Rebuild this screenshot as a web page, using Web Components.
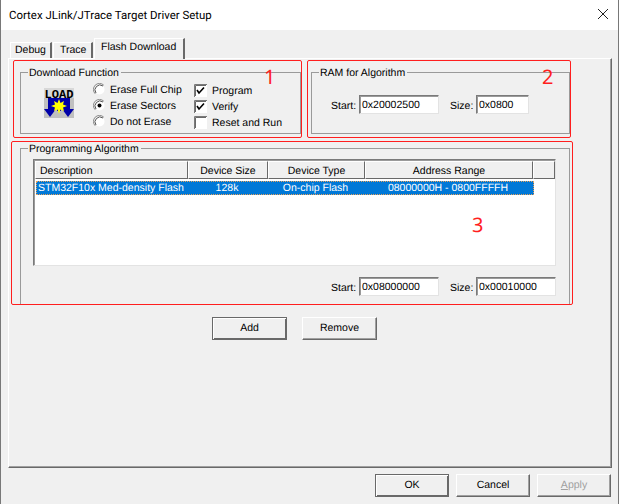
<!DOCTYPE html>
<html>
<head>
<meta charset="utf-8">
<title>Cortex JLink/JTrace Target Driver Setup</title>
<style>
    html{ margin: 0; padding: 0; background: #787878; }
    body{
        margin: 0 1px;
        padding: 0;
        width: 617px;
        height: 504px;
        overflow: hidden;
        background: #f0f0f0;
        font: 10.5px "Liberation Sans", Arial, sans-serif;
        text-rendering: geometricPrecision;
        color: #000;
    }
    .top_row{ display: grid; grid-template-columns: 281px 259px; column-gap: 10px; width: 550px; }
    .algo_group{ display: block; width: 550px; margin-top: 7px; }
</style>
</head>
<body>
<dlg-titlebar>Cortex JLink/JTrace Target Driver Setup</dlg-titlebar>
<dlg-tabs></dlg-tabs>
<dlg-panel>
    <div class="top_row">
        <dlg-group label="Download Function"><download-function></download-function></dlg-group>
        <dlg-group label="RAM for Algorithm"><ram-fields></ram-fields></dlg-group>
    </div>
    <dlg-group class="algo_group" label="Programming Algorithm"><algo-section></algo-section></dlg-group>
    <add-remove></add-remove>
</dlg-panel>
<dlg-footer></dlg-footer>

<red-mark x="13" y="60" w="289" h="78" tx="250" ty="5">1</red-mark>
<red-mark x="307" y="60" w="264" h="78" tx="234" ty="5">2</red-mark>
<red-mark x="11" y="141" w="562" h="164" tx="460" ty="72">3</red-mark>

<script>
class dlgTitlebar extends HTMLElement{
    constructor(){
        super();
        this.attachShadow({mode:"open"});
    }
    connectedCallback(){
        this.shadowRoot.innerHTML = `
        <style>
            :host{
                display: flex;
                align-items: center;
                justify-content: space-between;
                height: 30px;
                background: #fff;
                padding: 0 5px 0 8px;
                font: 11.45px Roboto, "Noto Sans", sans-serif;
            }
            svg{ display: block; margin: 0 4px 2px 0; }
        </style>
        <slot></slot>
        <svg width="12" height="12" viewBox="0 0 12 12"><path d="M1 1L11 11M11 1L1 11" stroke="#222" stroke-width="1" fill="none"/></svg>
        `;
    }
}

class dlgTabs extends HTMLElement{
    constructor(){
        super();
        this.attachShadow({mode:"open"});
    }
    connectedCallback(){
        this.shadowRoot.innerHTML = `
        <style>
            :host{
                display: flex;
                align-items: flex-end;
                height: 28px;
                padding-left: 9px;
                box-sizing: border-box;
                position: relative;
                z-index: 1;
            }
            .tab{
                box-sizing: border-box;
                height: 16px;
                padding: 0 0 0 4px;
                border-top: 1px solid #fff;
                border-left: 1px solid #fff;
                border-right: 2px solid #696969;
                margin-right: 1px;
                line-height: 14px;
            }
            .active{
                height: 21px;
                padding: 1px 0 0 6px;
                margin: 0 0 -1px 0;
                background: #f0f0f0;
            }
        </style>
        <div class="tab" style="width:42px">Debug</div>
        <div class="tab" style="width:40px;padding-left:6px">Trace</div>
        <div class="tab active" style="width:91px">Flash Download</div>
        `;
    }
}

class dlgPanel extends HTMLElement{
    constructor(){
        super();
        this.attachShadow({mode:"open"});
    }
    connectedCallback(){
        this.shadowRoot.innerHTML = `
        <style>
            :host{
                display: block;
                box-sizing: border-box;
                width: 604px;
                height: 410px;
                margin-left: 7px;
                padding: 6px 0 0 11px;
                border-top: 1px solid #fff;
                border-left: 1px solid #fff;
                border-right: 1px solid #696969;
                border-bottom: 1px solid #696969;
                box-shadow: inset -1px -1px 0 #a0a0a0;
            }
        </style>
        <slot></slot>
        `;
    }
}

class dlgGroup extends HTMLElement{
    constructor(){
        super();
        this.attachShadow({mode:"open"});
    }
    connectedCallback(){
        this.shadowRoot.innerHTML = `
        <style>
            :host{ display: block; }
            fieldset{
                margin: 0;
                padding: 0;
                border: 1px solid #9a9a9a;
                min-width: 0;
            }
            legend{
                margin-left: 7px;
                padding: 0 2px 0 1px;
                line-height: 14px;
            }
            legend span{ display: block; transform: translateY(1px); }
        </style>
        <fieldset>
            <legend><span>${this.getAttribute("label")}</span></legend>
            <slot></slot>
        </fieldset>
        `;
    }
}

class optRadio extends HTMLElement{
    constructor(){
        super();
        this.attachShadow({mode:"open"});
    }
    connectedCallback(){
        const dot = this.hasAttribute("checked") ? `<circle cx="6.5" cy="6.5" r="2" fill="#000"/>` : ``;
        this.shadowRoot.innerHTML = `
        <style>
            :host{ display: flex; align-items: center; height: 16px; column-gap: 4px; }
            svg{ display: block; flex: none; }
            span{ padding-top: 1px; }
        </style>
        <svg width="13" height="13" viewBox="0 0 13 13">
            <circle cx="6.5" cy="6.5" r="5" fill="#fff"/>
            <path d="M2.2 10.8A6 6 0 0 1 10.8 2.2" fill="none" stroke="#8a8a8a"/>
            <path d="M3 10A5 5 0 0 1 10 3" fill="none" stroke="#555"/>
            ${dot}
        </svg>
        <span><slot></slot></span>
        `;
    }
}

class optCheck extends HTMLElement{
    constructor(){
        super();
        this.attachShadow({mode:"open"});
    }
    connectedCallback(){
        const mark = this.hasAttribute("checked") ? `<path d="M3 6L5 9L10 3.5" fill="none" stroke="#000" stroke-width="1.6"/>` : ``;
        this.shadowRoot.innerHTML = `
        <style>
            :host{ display: flex; align-items: center; height: 16px; column-gap: 5px; }
            svg{ display: block; flex: none; }
            span{ padding-top: 1px; }
        </style>
        <svg width="13" height="13" viewBox="0 0 13 13">
            <rect x="0" y="0" width="13" height="13" fill="#fff"/>
            <path d="M0.5 13V0.5H13" fill="none" stroke="#7a7a7a"/>
            <path d="M1.5 12V1.5H12" fill="none" stroke="#696969"/>
            ${mark}
        </svg>
        <span><slot></slot></span>
        `;
    }
}

class downloadFunction extends HTMLElement{
    constructor(){
        super();
        this.attachShadow({mode:"open"});
    }
    connectedCallback(){
        this.shadowRoot.innerHTML = `
        <style>
            :host{ display: flex; height: 54px; padding: 2px 0 0 23px; box-sizing: border-box; }
            .icon{ display: block; margin: 7px 19px 0 0; }
            .col{ display: flex; flex-direction: column; width: 101px; }
            .col + .col{ margin-top: 1px; }
        </style>
        <svg class="icon" width="30" height="30" viewBox="0 0 30 30">
            <rect width="30" height="30" fill="#c0c0c0"/>
            <rect width="30" height="10" fill="#d8d8d8"/>
            <text x="0.5" y="9.5" textLength="29" lengthAdjust="spacingAndGlyphs" font-family="Liberation Mono, monospace" font-weight="700" font-size="12" fill="#000">LOAD</text>
            <path d="M4 10H26V21H30L24 29L18 21H17V23H13V21H12L6 29L0 21H4Z" fill="#0000a8"/>
            <path d="M15 11L16.5 15L20 13L19 16.5L23 18L19 19.5L20 23L16.5 21.5L15 26L13.5 21.5L10 23L11 19.5L7 18L11 16.5L10 13L13.5 15Z" fill="#ffff00"/>
        </svg>
        <div class="col">
            <opt-radio>Erase Full Chip</opt-radio>
            <opt-radio checked>Erase Sectors</opt-radio>
            <opt-radio>Do not Erase</opt-radio>
        </div>
        <div class="col">
            <opt-check checked>Program</opt-check>
            <opt-check checked>Verify</opt-check>
            <opt-check>Reset and Run</opt-check>
        </div>
        `;
    }
}

class addrField extends HTMLElement{
    constructor(){
        super();
        this.attachShadow({mode:"open"});
    }
    connectedCallback(){
        const label = this.getAttribute("label");
        const value = this.getAttribute("value");
        const width = this.getAttribute("width");
        const lw = label === "Start:" ? 25 : 23;
        this.shadowRoot.innerHTML = `
        <style>
            :host{ display: flex; align-items: center; column-gap: 3px; }
            span{ width: ${lw}px; padding-top: 2px; }
            .box{
                box-sizing: border-box;
                width: ${width}px;
                height: 19px;
                padding: 2px 0 0 2px;
                line-height: 14px;
                background: #fff;
                border: 1px solid;
                border-color: #7a7a7a #e3e3e3 #e3e3e3 #7a7a7a;
                box-shadow: inset 1px 1px 0 #9a9a9a;
            }
        </style>
        <span>${label}</span>
        <div class="box">${value}</div>
        `;
    }
}

class ramFields extends HTMLElement{
    constructor(){
        super();
        this.attachShadow({mode:"open"});
    }
    connectedCallback(){
        this.shadowRoot.innerHTML = `
        <style>
            :host{ display: flex; height: 54px; padding: 16px 0 0 19px; box-sizing: border-box; column-gap: 11px; align-items: flex-start; }
        </style>
        <addr-field label="Start:" value="0x20002500" width="80"></addr-field>
        <addr-field label="Size:" value="0x0800" width="53"></addr-field>
        `;
    }
}

class algoList extends HTMLElement{
    constructor(){
        super();
        this.attachShadow({mode:"open"});
    }
    connectedCallback(){
        this.shadowRoot.innerHTML = `
        <style>
            :host{
                display: block;
                box-sizing: border-box;
                width: 523px;
                height: 107px;
                background: #fff;
                border: 1px solid;
                border-color: #7a7a7a #e3e3e3 #e3e3e3 #7a7a7a;
                box-shadow: inset 1px 1px 0 #9a9a9a;
                padding: 1px 0 0 1px;
            }
            .head{
                display: grid;
                grid-template-columns: 153px 80px 97px 168px 1fr;
                height: 17px;
            }
            .head div{
                box-sizing: border-box;
                background: #f0f0f0;
                text-align: center;
                line-height: 14px;
                padding-top: 2px;
                border: 1px solid;
                border-color: #fff #696969 #696969 #fff;
            }
            .head div:first-child{ text-align: left; padding-left: 4px; }
            .row{
                display: grid;
                grid-template-columns: 151px 80px 97px 168px;
                width: 498px;
                height: 14px;
                margin: 3px 0 0 1px;
                background: #0078d7;
                color: #fff;
                line-height: 15px;
                outline: 1px dotted #e8a25a;
                outline-offset: -1px;
            }
            .row span{ text-align: center; white-space: nowrap; }
            .row span:first-child{ text-align: left; padding-left: 2px; }
        </style>
        <div class="head">
            <div>Description</div>
            <div>Device Size</div>
            <div>Device Type</div>
            <div>Address Range</div>
            <div></div>
        </div>
        <div class="row">
            <span>STM32F10x Med-density Flash</span>
            <span>128k</span>
            <span>On-chip Flash</span>
            <span>08000000H - 0800FFFFH</span>
        </div>
        `;
    }
}

class algoSection extends HTMLElement{
    constructor(){
        super();
        this.attachShadow({mode:"open"});
    }
    connectedCallback(){
        this.shadowRoot.innerHTML = `
        <style>
            :host{ display: block; height: 149px; box-sizing: border-box; padding: 4px 0 0 12px; }
            .fields{ display: flex; justify-content: flex-end; column-gap: 11px; width: 523px; margin-top: 11px; }
        </style>
        <algo-list></algo-list>
        <div class="fields">
            <addr-field label="Start:" value="0x08000000" width="80"></addr-field>
            <addr-field label="Size:" value="0x00010000" width="80"></addr-field>
        </div>
        `;
    }
}

class dlgButton extends HTMLElement{
    constructor(){
        super();
        this.attachShadow({mode:"open"});
    }
    connectedCallback(){
        this.shadowRoot.innerHTML = `
        <style>
            :host{
                display: flex;
                align-items: center;
                justify-content: center;
                box-sizing: border-box;
                width: var(--btn-w, 75px);
                height: 23px;
                padding-bottom: 1px;
                background: #f0f0f0;
                border: 1px solid;
                border-color: #fff #696969 #696969 #fff;
                box-shadow: inset -1px -1px 0 #a0a0a0;
            }
            :host([primary]){
                border-color: #696969;
                box-shadow: inset 1px 1px 0 #fff, inset -1px -1px 0 #696969;
            }
            :host([disabled]){ color: #a0a0a0; }
        </style>
        <slot></slot>
        `;
    }
}

class addRemove extends HTMLElement{
    constructor(){
        super();
        this.attachShadow({mode:"open"});
    }
    connectedCallback(){
        this.shadowRoot.innerHTML = `
        <style>
            :host{ display: flex; column-gap: 15px; margin: 12px 0 0 192px; }
        </style>
        <dlg-button primary>Add</dlg-button>
        <dlg-button>Remove</dlg-button>
        `;
    }
}

class dlgFooter extends HTMLElement{
    constructor(){
        super();
        this.attachShadow({mode:"open"});
    }
    connectedCallback(){
        this.shadowRoot.innerHTML = `
        <style>
            :host{ --btn-w: 74px; display: flex; justify-content: flex-end; column-gap: 7px; padding: 6px 7px 0 0; }
        </style>
        <dlg-button primary>OK</dlg-button>
        <dlg-button>Cancel</dlg-button>
        <dlg-button disabled><span><u>A</u>pply</span></dlg-button>
        `;
    }
}

// marcas rojas dibujadas encima del dialogo
class redMark extends HTMLElement{
    constructor(){
        super();
        this.attachShadow({mode:"open"});
    }
    connectedCallback(){
        const a = (n) => this.getAttribute(n);
        this.shadowRoot.innerHTML = `
        <style>
            :host{
                position: absolute;
                left: ${a("x")}px;
                top: ${a("y")}px;
                width: ${a("w")}px;
                height: ${a("h")}px;
                box-sizing: border-box;
                border: 1px solid #ff1e1e;
                border-radius: 2px;
            }
            span{
                position: absolute;
                left: ${a("tx")}px;
                top: ${a("ty")}px;
                color: #ff1e1e;
                font: 20px/22px "Noto Sans", sans-serif;
            }
        </style>
        <span><slot></slot></span>
        `;
    }
}

customElements.define("dlg-titlebar", dlgTitlebar);
customElements.define("dlg-tabs", dlgTabs);
customElements.define("dlg-panel", dlgPanel);
customElements.define("dlg-group", dlgGroup);
customElements.define("opt-radio", optRadio);
customElements.define("opt-check", optCheck);
customElements.define("download-function", downloadFunction);
customElements.define("addr-field", addrField);
customElements.define("ram-fields", ramFields);
customElements.define("algo-list", algoList);
customElements.define("algo-section", algoSection);
customElements.define("dlg-button", dlgButton);
customElements.define("add-remove", addRemove);
customElements.define("dlg-footer", dlgFooter);
customElements.define("red-mark", redMark);
</script>
</body>
</html>
